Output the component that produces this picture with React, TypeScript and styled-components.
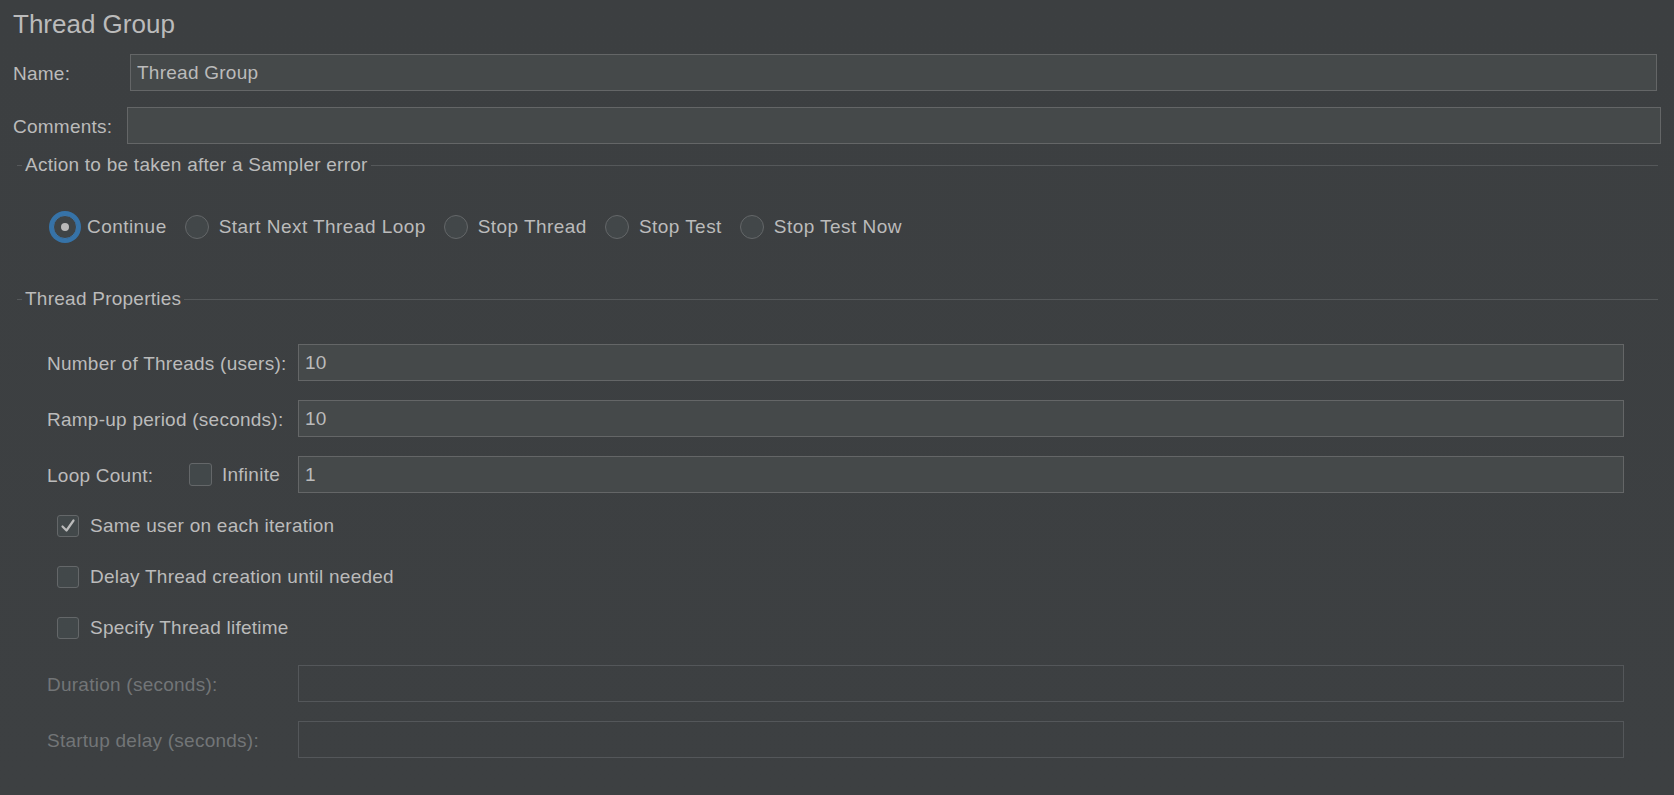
import React from "react";
import styled, { createGlobalStyle } from "styled-components";

const Global = createGlobalStyle`
  html, body {
    margin: 0;
    padding: 0;
    background: #3c3f41;
  }
  body {
    font-family: "Liberation Sans", Arial, Helvetica, sans-serif;
    color: #bbbbbb;
    -webkit-font-smoothing: antialiased;
  }
  * { box-sizing: border-box; }
`;

const Page = styled.div`
  width: 1674px;
  min-height: 795px;
  padding: 9px 0 0 13px;
  background: linear-gradient(180deg, #3c3f41 0%, #3d4042 100%);
  display: flex;
  flex-direction: column;
  letter-spacing: 0.25px;
`;

const Title = styled.h1`
  margin: 0;
  font-size: 26px;
  font-weight: 400;
  line-height: 30px;
  letter-spacing: 0;
  color: #bbbbbb;
`;

const FieldRow = styled.div<{ $top: number; $right: number }>`
  display: flex;
  align-items: center;
  margin-top: ${(p) => p.$top}px;
  padding-right: ${(p) => p.$right}px;
  height: 37px;
`;

const FieldLabel = styled.label<{ $width: number; $disabled?: boolean }>`
  flex: 0 0 ${(p) => p.$width}px;
  font-size: 19px;
  padding-top: 2px;
  color: ${(p) => (p.$disabled ? "#727577" : "#bbbbbb")};
  white-space: nowrap;
`;

const TextInput = styled.input<{ $disabled?: boolean }>`
  flex: 1;
  height: 37px;
  min-width: 0;
  margin: 0;
  padding: 0 6px;
  font-family: "Liberation Sans", Arial, Helvetica, sans-serif;
  font-size: 19px;
  letter-spacing: 0.25px;
  color: #bbbbbb;
  background: ${(p) => (p.$disabled ? "transparent" : "#45494a")};
  border: 1px solid ${(p) => (p.$disabled ? "#54575a" : "#646667")};
  border-radius: 0;
  outline: none;
`;

const Section = styled.section<{ $top: number }>`
  margin-top: ${(p) => p.$top}px;
  display: flex;
  flex-direction: column;
`;

const SectionHeader = styled.div`
  display: flex;
  align-items: center;
  height: 22px;
  padding: 0 16px 0 4px;
`;

const Dash = styled.span`
  width: 5px;
  height: 1px;
  background: #55585a;
`;

const SectionTitle = styled.span`
  padding: 0 3px;
  font-size: 19px;
  white-space: nowrap;
`;

const Rule = styled.span`
  flex: 1;
  height: 1px;
  background: #55585a;
`;

const RadioGroup = styled.div`
  display: flex;
  align-items: center;
  gap: 18px;
  height: 32px;
  margin-top: 35px;
  padding-left: 40px;
`;

const RadioItem = styled.label`
  display: flex;
  align-items: center;
  gap: 10px;
  font-size: 19px;
  letter-spacing: 0.45px;
  white-space: nowrap;
`;

const RadioCircle = styled.span<{ $checked?: boolean }>`
  width: 24px;
  height: 24px;
  border-radius: 50%;
  border: 1px solid ${(p) => (p.$checked ? "#3b77ad" : "#646769")};
  background: ${(p) => (p.$checked ? "#3f4446" : "#424749")};
  box-shadow: ${(p) => (p.$checked ? "0 0 0 4px #3673a8" : "none")};
  display: flex;
  align-items: center;
  justify-content: center;
  &::after {
    content: "";
    display: ${(p) => (p.$checked ? "block" : "none")};
    width: 8px;
    height: 8px;
    border-radius: 50%;
    background: #b9b9b9;
  }
`;

const PropsBody = styled.div`
  display: flex;
  flex-direction: column;
  padding: 0 50px 0 34px;
`;

const PropRow = styled.div<{ $top: number }>`
  display: flex;
  align-items: center;
  height: 37px;
  margin-top: ${(p) => p.$top}px;
`;

const LoopLabel = styled.div`
  flex: 0 0 251px;
  display: flex;
  align-items: center;
  font-size: 19px;
  white-space: nowrap;
`;

const LoopText = styled.span`
  width: 142px;
  padding-top: 2px;
`;

const InlineCheck = styled.label`
  display: flex;
  align-items: center;
  gap: 10px;
`;

const CheckRow = styled.label<{ $top: number }>`
  display: flex;
  align-items: center;
  gap: 11px;
  height: 30px;
  margin-top: ${(p) => p.$top}px;
  padding-left: 10px;
  font-size: 19px;
  white-space: nowrap;
`;

const CheckBox = styled.span<{ $size: number }>`
  width: ${(p) => p.$size}px;
  height: ${(p) => p.$size}px;
  border: 1px solid #646769;
  border-radius: 3px;
  background: #42484a;
  display: flex;
  align-items: center;
  justify-content: center;
`;

const Check = () => (
  <svg width="18" height="18" viewBox="0 0 18 18" fill="none">
    <path d="M3.5 9.5 L7.5 13.5 L14.5 3.5" stroke="#bbbbbb" strokeWidth="2.2" strokeLinecap="round" strokeLinejoin="round" />
  </svg>
);

const radios = [
  { label: "Continue", checked: true },
  { label: "Start Next Thread Loop" },
  { label: "Stop Thread" },
  { label: "Stop Test" },
  { label: "Stop Test Now" },
];

export default function App() {
  return (
    <>
      <Global />
      <Page>
        <Title>Thread Group</Title>
        <FieldRow $top={15} $right={17}>
          <FieldLabel $width={117}>Name:</FieldLabel>
          <TextInput defaultValue="Thread Group" />
        </FieldRow>
        <FieldRow $top={16} $right={13}>
          <FieldLabel $width={114}>Comments:</FieldLabel>
          <TextInput defaultValue="" />
        </FieldRow>

        <Section $top={10}>
          <SectionHeader>
            <Dash />
            <SectionTitle>Action to be taken after a Sampler error</SectionTitle>
            <Rule />
          </SectionHeader>
          <RadioGroup>
            {radios.map((r) => (
              <RadioItem key={r.label}>
                <RadioCircle $checked={r.checked} />
                {r.label}
              </RadioItem>
            ))}
          </RadioGroup>
        </Section>

        <Section $top={45}>
          <SectionHeader>
            <Dash />
            <SectionTitle>Thread Properties</SectionTitle>
            <Rule />
          </SectionHeader>
          <PropsBody>
            <PropRow $top={34}>
              <FieldLabel $width={251}>Number of Threads (users):</FieldLabel>
              <TextInput defaultValue="10" />
            </PropRow>
            <PropRow $top={19}>
              <FieldLabel $width={251}>Ramp-up period (seconds):</FieldLabel>
              <TextInput defaultValue="10" />
            </PropRow>
            <PropRow $top={19}>
              <LoopLabel>
                <LoopText>Loop Count:</LoopText>
                <InlineCheck>
                  <CheckBox $size={23} />
                  Infinite
                </InlineCheck>
              </LoopLabel>
              <TextInput defaultValue="1" />
            </PropRow>
            <CheckRow $top={18}>
              <CheckBox $size={22}>
                <Check />
              </CheckBox>
              Same user on each iteration
            </CheckRow>
            <CheckRow $top={21}>
              <CheckBox $size={22} />
              Delay Thread creation until needed
            </CheckRow>
            <CheckRow $top={21}>
              <CheckBox $size={22} />
              Specify Thread lifetime
            </CheckRow>
            <PropRow $top={22}>
              <FieldLabel $width={251} $disabled>Duration (seconds):</FieldLabel>
              <TextInput $disabled disabled />
            </PropRow>
            <PropRow $top={19}>
              <FieldLabel $width={251} $disabled>Startup delay (seconds):</FieldLabel>
              <TextInput $disabled disabled />
            </PropRow>
          </PropsBody>
        </Section>
      </Page>
    </>
  );
}
